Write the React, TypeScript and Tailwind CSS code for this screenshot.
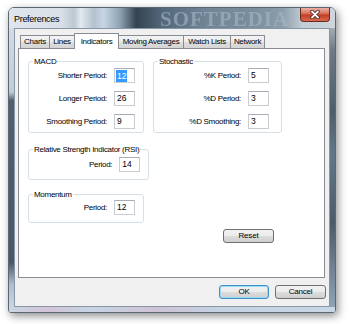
import React from "react";

const FONT = "font-['Liberation_Sans',Arial,sans-serif]";

const TABS = [
  { name: "Charts", w: "w-[30px]" },
  { name: "Lines", w: "w-[26px]" },
  { name: "Indicators", w: "w-[45px]", active: true },
  { name: "Moving Averages", w: "w-[66px]" },
  { name: "Watch Lists", w: "w-[48px]" },
  { name: "Network", w: "w-[35px]" },
];

const Field = ({ label, value, selected }: { label: string; value: string; selected?: boolean }) => (
  <div className="flex items-center justify-end gap-[7px] h-[15px]">
    <span className="text-[8px] leading-none tracking-[-0.3px] text-black whitespace-nowrap">{label}</span>
    <div className="w-[21px] h-[15px] shrink-0 bg-white border border-[#c9ccd3] border-t-[#a9acb4] pl-[1px] pt-[1px] text-[8.5px] leading-[11px]">
      {selected ? (
        <span className="inline-block bg-[#3399ff] text-white px-[1px] leading-[12px]">{value}</span>
      ) : (
        <span className="pl-[1px]">{value}</span>
      )}
    </div>
  </div>
);

const Group = ({ title, className, children }: { title: string; className: string; children: React.ReactNode }) => (
  <fieldset className={"border border-[#d5dfe5] rounded-[3px] " + className}>
    <legend className="ml-[4px] px-[1px] text-[8px] leading-[11px] tracking-[-0.3px] text-black whitespace-nowrap">{title}</legend>
    {children}
  </fieldset>
);

const Button = ({ label, primary }: { label: string; primary?: boolean }) => (
  <div
    className={
      "h-[14px] flex items-center justify-center rounded-[3px] text-[8px] tracking-[-0.2px] text-black border bg-[linear-gradient(180deg,#f2f2f2_0%,#ebebeb_48%,#dddddd_52%,#cfcfcf_100%)] " +
      (primary
        ? "w-[50px] border-[#3c8fc8] shadow-[inset_0_0_0_1px_#9ad9f7]"
        : "w-[51px] border-[#707070]")
    }
  >
    {label}
  </div>
);

export default function App() {
  return (
    <div className={"w-[350px] h-[324px] bg-white pl-[8px] pt-[7px] " + FONT}>
      <div className="w-[328px] h-[306px] flex flex-col border border-[#5d6771] rounded-t-[6px] rounded-b-[3px] overflow-hidden shadow-[2px_3px_9px_rgba(0,0,0,0.45)]">
        {/* title bar */}
        <div className="h-[20px] flex items-start bg-[linear-gradient(90deg,#dfe5ec_0%,#d9e0e8_16%,#bcc8d3_20%,#e3e9ef_22%,#b4c2cf_26%,#c8d6e3_29%,#8ea3b5_34%,#34434f_39%,#52677a_47%,#6f8596_60%,#7a8e9d_75%,#8c9eac_84%,#c2ccd4_90%,#cfd6dc_100%)]">
          <div className="w-[151px] pl-[5px] pt-[6px] text-[9px] leading-[10px] tracking-[-0.3px] text-black">Preferences</div>
          <div className="pt-[1px] font-['Liberation_Serif',serif] font-bold text-[21px] leading-[20px] tracking-[1px] text-[#a7b8c6] opacity-60 blur-[0.6px]">
            SOFTPEDIA
          </div>
          <div className="ml-auto mr-[5px] w-[30px] h-[14px] flex items-center justify-center border border-t-0 border-[#6b2a1e] rounded-b-[4px] bg-[linear-gradient(180deg,#eab0a2_0%,#d77763_40%,#c23e25_55%,#d66a4f_100%)]">
            <svg width="10" height="9" viewBox="0 0 10 9">
              <path d="M2 1.5 L8 7.5 M8 1.5 L2 7.5" stroke="#4a1a12" strokeWidth="3.4" strokeLinecap="round" />
              <path d="M2 1.5 L8 7.5 M8 1.5 L2 7.5" stroke="#ffffff" strokeWidth="1.8" strokeLinecap="round" />
            </svg>
          </div>
        </div>

        <div className="flex flex-1">
          {/* left frame */}
          <div className="w-[5px] bg-[linear-gradient(180deg,#d3dce5_0%,#c0ccd7_23%,#4f6070_26%,#485868_84%,#aebfd0_92%,#c9d6e4_100%)]" />

          {/* client area */}
          <div className="flex-1 flex flex-col bg-[#f0f0f0] border border-[#8996a3] pl-[3px] pt-[4px]">
            <div className="h-[15px] flex items-end pl-[2px] relative z-10">
              {TABS.map((t, i) =>
                t.active ? (
                  <div
                    key={t.name}
                    className={t.w + " -ml-px h-[16px] -mb-px bg-white border border-b-0 border-[#898c95] flex items-center justify-center text-[8px] tracking-[-0.3px] text-black whitespace-nowrap"}
                  >
                    {t.name}
                  </div>
                ) : (
                  <div
                    key={t.name}
                    className={
                      t.w +
                      (i > 0 ? " -ml-px" : "") +
                      " h-[13px] border border-b-0 border-[#898c95] bg-[linear-gradient(180deg,#f3f3f3_0%,#ebebeb_50%,#dedede_51%,#d4d4d4_100%)] flex items-center justify-center text-[8px] tracking-[-0.3px] text-black whitespace-nowrap"
                    }
                  >
                    {t.name}
                  </div>
                )
              )}
            </div>

            {/* tab page */}
            <div className="w-[307px] h-[230px] bg-white border border-[#898c95] flex gap-[9px] pl-[9px] pt-[7px]">
              <div className="w-[116px] flex flex-col">
                <Group title="MACD" className="pt-[1px] pb-[3px] pr-[8px]">
                  <div className="flex flex-col gap-[8px]">
                    <Field label="Shorter Period:" value="12" selected />
                    <Field label="Longer Period:" value="26" />
                    <Field label="Smoothing Period:" value="9" />
                  </div>
                </Group>
                <Group title="Relative Strength Indicator (RSI)" className="mt-[11px] pt-[2px] pb-[7px] pr-[8px]">
                  <Field label="Period:" value="14" />
                </Group>
                <Group title="Momentum" className="mt-[9px] pt-[0px] pb-[7px] pr-[8px]">
                  <Field label="Period:" value="12" />
                </Group>
              </div>

              <div className="w-[129px] flex flex-col items-end">
                <Group title="Stochastic" className="w-full pt-[1px] pb-[3px] pr-[12px]">
                  <div className="flex flex-col gap-[8px]">
                    <Field label="%K Period:" value="5" />
                    <Field label="%D Period:" value="3" />
                    <Field label="%D Smoothing:" value="3" />
                  </div>
                </Group>
                <div className="mt-[96px] mr-[8px]">
                  <Button label="Reset" primary={false} />
                </div>
              </div>
            </div>

            <div className="flex justify-end gap-[6px] mt-[7px] pr-[3px]">
              <Button label="OK" primary />
              <Button label="Cancel" />
            </div>
          </div>

          {/* right frame */}
          <div className="w-[5px] bg-[linear-gradient(180deg,#a4adb5_0%,#6d7a85_8%,#4e5d69_30%,#62788a_45%,#4b5b68_70%,#8fa4b8_100%)]" />
        </div>

        {/* bottom frame */}
        <div className="h-[5px] bg-[linear-gradient(90deg,#c9d6e4_0%,#d3c3d6_12%,#c7d5e5_25%,#cfc2d6_45%,#c4d3e3_65%,#c9d6e4_100%)]" />
      </div>
    </div>
  );
}
